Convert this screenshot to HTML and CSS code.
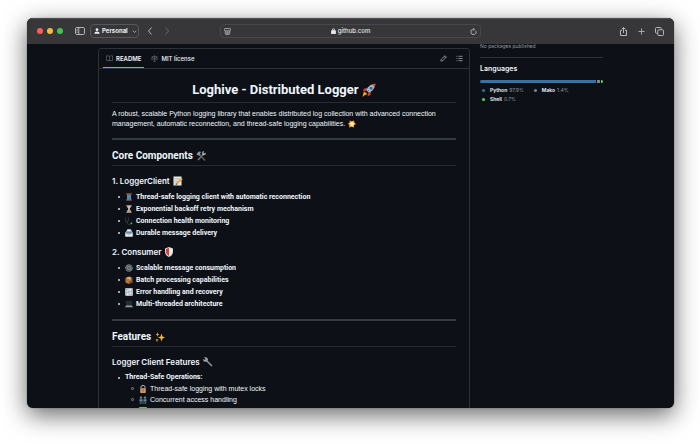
FILE: index.html
```html
<!DOCTYPE html>
<html lang="en">
<head>
<meta charset="utf-8">
<meta name="viewport" content="width=device-width, initial-scale=1">
<title>Loghive - Distributed Logger</title>
<link rel="stylesheet" href="styles.css">
</head>
<body>
<div class="window">
  <header class="toolbar">
    <div class="tools">
      <span class="lights"><i class="light close"></i><i class="light minimise"></i><i class="light expand"></i></span>
      <button class="tool" aria-label="Show sidebar"><svg class="wide" viewBox="0 0 20 16"><rect x="1" y="1" width="18" height="14" rx="2.5"/><path d="M7.5 1v14M3.3 4.500h2M3.300 7.500h2M3.300 10.500h2"/></svg></button>
      <button class="profile"><svg class="person" viewBox="0 0 16 16"><circle cx="8" cy="4.500" r="3.800"/><path d="M1 15c0-8 14-8 14 0z"/></svg>Personal<svg class="caret" viewBox="0 0 10 10"><path d="M1.500 3.500 5 7l3.500-3.500"/></svg></button>
      <button class="tool back" aria-label="Back"><svg viewBox="0 0 16 16"><path d="M11 1 5 8l6 7"/></svg></button>
      <button class="tool forward" aria-label="Forward"><svg viewBox="0 0 16 16"><path d="m5 1 6 7-6 7"/></svg></button>
    </div>
    <div class="address">
      <button class="tool" aria-label="Page menu"><svg viewBox="0 0 16 16"><rect x="1" y="1" width="14" height="5.500" rx="2"/><path d="M3 7v5.500q0 2.500 2.500 2.500h5q2.500 0 2.500-2.500V7M5 9.500h6M5 12h6"/></svg></button>
      <span class="host"><svg viewBox="0 0 12 14"><rect x="1" y="6" width="10" height="8" rx="1.500"/><path d="M3.500 6V4a2.500 2.500 0 0 1 5 0v2"/></svg>github.com</span>
      <button class="tool" aria-label="Reload"><svg viewBox="0 0 16 16"><path d="M13.500 6.500A6 6 0 1 1 8 3h2M7.500.500 10.500 3 7.500 5.800"/></svg></button>
    </div>
    <div class="tools end">
      <button class="tool" aria-label="Share"><svg class="big" viewBox="0 0 18 18"><path d="M6 6.500H3V17h12V6.500h-3M9 12V1M5.500 4.500 9 1l3.500 3.500"/></svg></button>
      <button class="tool" aria-label="New tab"><svg viewBox="0 0 16 16"><path d="M8 1v14M1 8h14"/></svg></button>
      <button class="tool" aria-label="Tab overview"><svg class="big" viewBox="0 0 18 18"><rect x="5.500" y="5.500" width="11.500" height="11.500" rx="2"/><path d="M5.500 12.500H3q-2 0-2-2V3q0-2 2-2h7.500q2 0 2 2v2.500"/></svg></button>
    </div>
  </header>

  <main class="page">
    <section class="readme">
      <nav class="tabs">
        <a class="tab active" href="#readme"><svg viewBox="0 0 16 16"><path d="M8 3.500Q7 2 4.500 2H1v10.500h4Q7.500 12.500 8 14q.5-1.500 3-1.500h4V2h-3.500Q9 2 8 3.500V14"/></svg>README</a>
        <a class="tab" href="#license"><svg viewBox="0 0 16 16"><path d="M8 1v13M5 14.500h6M1.500 4H4l4-1.500L12 4h2.500M3.500 4 1 9.500q2.500 2 5 0zM12.500 4 10 9.500q2.500 2 5 0z"/></svg>MIT license</a>
        <span class="actions">
          <button class="tool" aria-label="Edit"><svg viewBox="0 0 16 16"><path d="M2 14l1-4.500L11.500 1.500l3 3L6.500 13zM9.500 3.500l3 3"/></svg></button>
          <button class="tool" aria-label="Outline"><svg viewBox="0 0 16 16"><path d="M5.500 3H15M5.500 8H15M5.500 13H15M1 3h2M1 8h2M1 13h2"/></svg></button>
        </span>
      </nav>
      <article class="article" id="readme">
        <h1>Loghive - Distributed Logger
          <svg class="emoji" viewBox="0 0 20 20"><path fill="#f7a52b" d="m3 12 5 4-4 1-3 3 .5-4z"/><path fill="#d93b31" d="m8 7-5 1-2 4 5-1zM13 12l-1 5-4 2 1-5z"/><path fill="#a9b8c6" d="M19 1q-8 0-13 9l4 4q9-5 9-13z"/><path fill="#d94b3d" d="M19 1q-3 0-5 1l4 4q1-2 1-5z"/><circle cx="13" cy="7.500" r="2" fill="#286b9f"/><path stroke="#526574" d="m6 14 4-4"/></svg></h1>
        <p>A robust, scalable Python logging library that enables distributed log collection with advanced connection management, automatic reconnection, and thread-safe logging capabilities.
          <svg class="emoji" viewBox="0 0 20 20"><path fill="#ed9a23" d="m4 1 5 2 6-2 1 5 4 4-5 3v6l-6-2-6 2v-6L0 9l4-3z"/><path fill="#fff6cf" d="m10 3 2 4 5 1-4 3 1 5-4-2-4 2 1-5-4-3 5-1z"/></svg></p>
        <hr>
        <h2>Core Components
          <svg class="emoji" viewBox="0 0 20 20"><path stroke="#777f86" stroke-width="2.500" d="M4 18 15 6"/><path fill="#a8afb5" d="m12 6 1-5 3-1-1 4 2 1 3-2-1 4-4 2z"/><path stroke="#685b50" stroke-width="3" d="m8 8 10 11"/><path fill="#8e989f" d="M1 6 6 1l5 1-3 2 1 4-3 2-2-3-1 2z"/></svg></h2>
        <h3>1. LoggerClient
          <svg class="emoji" viewBox="0 0 20 20"><path fill="#e9e9e6" d="M1 1h16v18H1z"/><path stroke="#9ca0a3" d="M3 5h11M3 8h9M3 11h6M3 14h4"/><path stroke="#efa62a" stroke-width="4" d="m8 15 10-10"/><path fill="#4a4038" d="m5 18 1-4 3 3z"/></svg></h3>
        <ul class="list strong">
          <li><svg class="emoji" viewBox="0 0 20 20"><path fill="#377eb0" d="M5 4h10v13H5z"/><path fill="#c17b3b" d="M3 1h14v3H3zM3 16h14v3H3z"/><path stroke="#78add0" d="M5 7h10M5 10h10M5 13h10"/></svg>Thread-safe logging client with automatic reconnection</li>
          <li><svg class="emoji" viewBox="0 0 20 20"><path fill="#c8dce4" d="M5 2h10q0 5-4 8 4 3 4 8H5q0-5 4-8-4-3-4-8z"/><path fill="#de9c4c" d="M7 6h6l-3 4zM6 17q1-4 4-5 3 1 4 5z"/><path fill="#997d70" d="M3 0h14v3H3zM3 17h14v3H3z"/></svg>Exponential backoff retry mechanism</li>
          <li><svg class="emoji" viewBox="0 0 20 20"><path stroke="#394149" stroke-width="2" d="M3 2H1v5q0 5 4 5t4-5V2H7M5 12q0 7 6 7t5-8"/><circle cx="16" cy="16" r="2" fill="#929ca4"/></svg>Connection health monitoring</li>
          <li><svg class="emoji" viewBox="0 0 20 20"><path fill="#c6ccd1" d="m1 9 5-8h9l4 8v10H1z"/><path fill="#5790b1" d="M3 6h14v5H3z"/><path fill="#edf0f1" d="m1 10 9 5 9-5v9H1zM6 1h8v4H6z"/><path stroke="#88939b" d="m1 10 9 5 9-5"/></svg>Durable message delivery</li>
        </ul>
        <h3>2. Consumer
          <svg class="emoji" viewBox="0 0 20 20"><path fill="#d7dce0" d="m10 0 8 3v7q0 7-8 10-8-3-8-10V3z"/><path fill="#cf4136" d="M10 2v16Q4 15 4 10V4z"/><path fill="#f0ece6" d="m10 2 6 2v6q0 5-6 8z"/></svg></h3>
        <ul class="list strong">
          <li><svg class="emoji" viewBox="0 0 20 20"><circle cx="10" cy="10" r="8" fill="none" stroke="#8d959b" stroke-width="3" stroke-dasharray="2.500 1"/><circle cx="10" cy="10" r="5.500" fill="#636b70" stroke="#a6abae"/><path stroke="#b1b5b7" d="M10 4v12M4 10h12"/><circle cx="10" cy="10" r="2" fill="#343c43"/></svg>Scalable message consumption</li>
          <li><svg class="emoji" viewBox="0 0 20 20"><path fill="#d99b63" d="m1 5 10-4 8 4-9 4z"/><path fill="#b8733f" d="m1 5 9 4v11l-9-4z"/><path fill="#8e542d" d="m10 9 9-4v11l-9 4z"/><path fill="#e2c09b" d="m5 3 9 4v4l-3 1V8L4 5z"/></svg>Batch processing capabilities</li>
          <li><svg class="emoji" viewBox="0 0 20 20"><rect width="20" height="20" rx="3" fill="#aeb8bf"/><path fill="none" stroke="#fff" stroke-width="2" d="M4 10q0-5 6-5h5M12 2l3 3-3 3M16 10q0 5-6 5H5M8 12l-3 3 3 3"/></svg>Error handling and recovery</li>
          <li><svg class="emoji" viewBox="0 0 20 20"><path fill="#252b31" stroke="#39434b" d="M3 3h14v10H3z"/><path fill="#aab0b4" d="m3 14h14l3 4H0z"/><path stroke="#596168" d="M2 16h16"/></svg>Multi-threaded architecture</li>
        </ul>
        <hr>
        <h2>Features
          <svg class="emoji" viewBox="0 0 20 20"><path fill="#f4b63e" d="m13 3 2 6 5 2-5 2-2 6-2-6-5-2 5-2zM5 0l1 4 3 1-3 1-1 4-1-4-3-1 3-1zM4 13l1 2 2 1-2 1-1 3-1-3-2-1 2-1z"/></svg></h2>
        <h3>Logger Client Features
          <svg class="emoji" viewBox="0 0 20 20"><path stroke="#8e969d" stroke-width="3" d="M6 6 18 18"/><path fill="#9ea6ac" d="m2 0 3 4-1 2-4-2q0 7 7 5l3-3q0-6-8-6z"/></svg></h3>
        <ul class="list">
          <li><strong class="group">Thread-Safe Operations:</strong>
            <ul class="list nested">
              <li><svg class="emoji" viewBox="0 0 20 20"><path fill="none" stroke="#a9b0b5" stroke-width="2.500" d="M5 9V5q0-4 5-4t5 4v4"/><rect x="3" y="8" width="14" height="12" rx="1" fill="#d39455"/><path stroke="#664222" stroke-width="2" d="M10 12v4"/></svg>Thread-safe logging with mutex locks</li>
              <li><svg class="emoji" viewBox="0 0 20 20"><g fill="#6b8798"><circle cx="5" cy="4" r="3"/><circle cx="15" cy="4" r="3"/><path d="M1 8h8v6H1zM11 8h8v6h-8z"/></g><path fill="#3f5f75" d="M2 14h3v6H2zM6 14h3v6H6zM11 14h3v6h-3zM15 14h3v6h-3z"/></svg>Concurrent access handling</li>
              <li><svg class="emoji" viewBox="0 0 20 20"><rect width="20" height="20" rx="2" fill="#4fc75b"/><path fill="none" stroke="#fff" stroke-width="3" d="m4 11 4 4 8-9"/></svg></li>
            </ul>
          </li>
        </ul>
      </article>
    </section>

    <aside class="sidebar">
      <p class="packages">No packages published</p>
      <h2>Languages</h2>
      <div class="bar"><i class="python"></i><i class="mako"></i><i class="shell"></i></div>
      <ul class="legend">
        <li><i class="python"></i><b>Python</b> 97.9%</li>
        <li><i class="mako"></i><b>Mako</b> 1.4%</li>
        <li><i class="shell"></i><b>Shell</b> 0.7%</li>
      </ul>
    </aside>
  </main>
</div>
</body>
</html>
```
FILE: styles.css
```css
*, *::before { box-sizing: border-box; }

body {
  margin: 0;
  min-height: 100vh;
  padding: 18px 26px 36px 27px;
  background: #fff;
  color: #f0f6fc;
  font: 6px/10px Inter, "Liberation Sans", sans-serif;
}

h1, h2, h3, p, ul { margin: 0; padding: 0; }
ul { list-style: none; }
a { color: inherit; text-decoration: none; }

button {
  padding: 0;
  border: 0;
  background: none;
  color: inherit;
  font: inherit;
}

.window {
  height: calc(100vh - 54px);
  overflow: hidden;
  border-radius: 6px;
  background: #0d1117;
  box-shadow: 0 0 1px #222, 0 7px 24px rgba(0, 0, 0, .6);
}

/* Browser toolbar */
.toolbar {
  display: grid;
  grid-template-columns: 1fr minmax(0, 261px) 1fr;
  align-items: center;
  height: 26px;
  background: #373739;
  box-shadow: inset 0 1px #505153;
  color: #b4b6ba;
}

.toolbar svg, .tabs svg {
  display: block;
  width: 7px;
  height: 7px;
  fill: none;
  stroke: currentColor;
  stroke-width: 2;
}

.tools { display: flex; align-items: center; padding-left: 10px; }
.end { justify-content: flex-end; gap: 10px; padding: 0 10px 0 0; }
.lights { display: flex; gap: 4px; margin-right: 12px; }
.light { width: 6px; height: 6px; border-radius: 50%; }
.close { background: #fc5f57; }
.minimise { background: #f6b93d; }
.expand { background: #3fc451; }
.toolbar .wide { width: 10px; height: 8px; }
.toolbar .big { width: 9px; height: 9px; }

.profile {
  display: flex;
  align-items: center;
  gap: 2px;
  height: 14px;
  margin: 0 7px 0 5px;
  padding: 0 1px 0 3px;
  border: 1px solid #55585e;
  border-radius: 4px;
  color: #eceef0;
  font-weight: 700;
}

.toolbar .person { width: 6px; height: 6px; fill: currentColor; stroke: none; }
.toolbar .caret { width: 5px; height: 5px; margin-left: 2px; color: #a0a2a6; }
.toolbar .back svg, .toolbar .forward svg { width: 8px; height: 8px; }
.back { margin-right: 9px; }
.forward { color: #66686c; }

.address {
  display: flex;
  align-items: center;
  justify-content: space-between;
  height: 14px;
  padding: 0 3px;
  border: 1px solid #47484b;
  border-radius: 4px;
}

.host { display: flex; align-items: center; gap: 2px; color: #e6e7e9; font-weight: 500; }
.toolbar .host svg { width: 5px; height: 6px; }
.host rect { fill: currentColor; }

/* Repository page */
.page {
  display: grid;
  grid-template-columns: minmax(0, 1fr) 123px;
  gap: 10px;
  padding: 0 71px;
}

.readme {
  margin-top: 4px;
  border: 1px solid #2c323a;
  border-radius: 3px;
}

.tabs {
  display: flex;
  gap: 4px;
  height: 20px;
  padding: 0 6px 0 4px;
  border-bottom: 1px solid #2c323a;
}

.tab {
  display: flex;
  align-items: center;
  gap: 3px;
  padding: 0 3px;
  font-weight: 500;
}

.tab svg, .actions { color: #9198a1; }
.tab svg { stroke-width: 1; }
.active { box-shadow: inset 0 -1px #f0875f; font-weight: 600; }
.actions { display: flex; align-items: center; gap: 9px; margin-left: auto; }

.article {
  padding: 13px 13px 0;
  font-family: "Liberation Sans", Arial, sans-serif;
  font-size: 7px;
}

.emoji { fill: none; }

h1, .article h2, .strong, .group { font-family: Roboto, "Liberation Sans", sans-serif; font-weight: 700; }
h1, .article h2 { border-bottom: 1px solid #252b33; }
h1 { padding-bottom: 4px; margin-bottom: 6px; font-size: 13px; line-height: 16px; text-align: center; }
.article h2 { padding-bottom: 2px; font-size: 10px; line-height: 14px; }
h3 { margin: 7px 0 4px; font-family: Inter, sans-serif; font-size: 8px; line-height: 12px; font-weight: 600; }
h2 + h3 { margin-top: 9px; }
h1 .emoji { width: 14px; height: 14px; vertical-align: -3px; }
h2 .emoji, h3 .emoji { width: 10px; height: 10px; margin-left: 1px; vertical-align: -2px; }

hr { height: 2px; margin: 9px 0; border: 0; background: #343a42; }
p .emoji { width: 8px; height: 8px; vertical-align: -2px; margin-left: 1px; }

.list { padding-left: 13px; line-height: 12px; }
.list > li::before {
  content: "";
  float: left;
  width: 2px;
  height: 2px;
  margin: 5px 0 0 -7px;
  border-radius: 50%;
  background: #d5dae0;
}
.list .emoji { width: 8px; height: 8px; margin-right: 3px; vertical-align: -2px; }
.group { display: block; line-height: 11px; }
.nested { padding-left: 14px; line-height: 11px; }
.nested > li::before {
  width: 3px;
  height: 3px;
  margin: 4px 0 0 -8px;
  border: 1px solid #8b9199;
  background: none;
}

/* Repository details */
.sidebar { color: #9198a1; font-size: 5px; line-height: 9px; }
.packages { padding-bottom: 6px; margin-top: -2px; border-bottom: 1px solid #2c323a; }
.sidebar h2 { margin: 6px 0; color: #f0f6fc; font-size: 7px; line-height: 10px; font-weight: 600; }
.bar { display: flex; gap: 1px; height: 3px; overflow: hidden; border-radius: 2px; }
.bar i { flex: none; width: 2px; }
.bar .python { flex: 1; }
.bar .mako { width: 3px; }
.python { background: #3572a5; }
.mako { background: #7e858d; }
.shell { background: #55d64d; }
.legend { display: flex; flex-wrap: wrap; column-gap: 10px; margin-top: 3px; padding-left: 2px; }
.legend li { display: flex; align-items: center; gap: 2px; }
.legend i { width: 3px; height: 3px; margin-right: 3px; border-radius: 50%; }
.legend b { color: #f0f6fc; font-weight: 600; }
```
